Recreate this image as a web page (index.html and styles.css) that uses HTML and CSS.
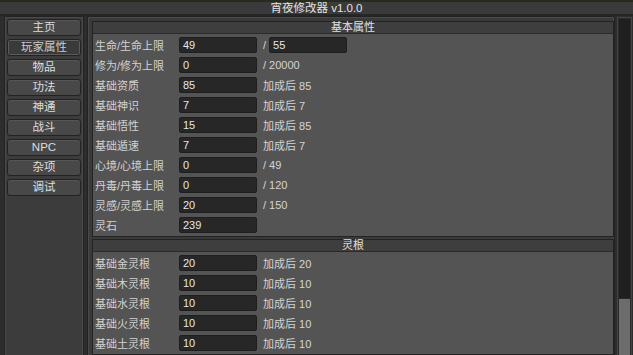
FILE: index.html
```html
<!DOCTYPE html>
<html lang="zh">
<head>
    <meta charset="UTF-8">
    <title>宵夜修改器 v1.0.0</title>
    <link rel="stylesheet" href="styles.css">
</head>
<body>

<div class="titlebar">宵夜修改器 v1.0.0</div>

<div class="window">
    <nav class="sidebar">
        <div class="nav-btn">主页</div>
        <div class="nav-btn active">玩家属性</div>
        <div class="nav-btn">物品</div>
        <div class="nav-btn">功法</div>
        <div class="nav-btn">神通</div>
        <div class="nav-btn">战斗</div>
        <div class="nav-btn">NPC</div>
        <div class="nav-btn">杂项</div>
        <div class="nav-btn">调试</div>
    </nav>

    <main class="content">
        <section class="group">
            <div class="group-head">基本属性</div>
            <div class="group-body">
                <div class="row"><span class="label">生命/生命上限</span><span class="field">49</span><span class="extra slash">/</span><span class="field">55</span></div>
                <div class="row"><span class="label">修为/修为上限</span><span class="field">0</span><span class="extra">/ 20000</span></div>
                <div class="row"><span class="label">基础资质</span><span class="field">85</span><span class="extra">加成后 85</span></div>
                <div class="row"><span class="label">基础神识</span><span class="field">7</span><span class="extra">加成后 7</span></div>
                <div class="row"><span class="label">基础悟性</span><span class="field">15</span><span class="extra">加成后 85</span></div>
                <div class="row"><span class="label">基础遁速</span><span class="field">7</span><span class="extra">加成后 7</span></div>
                <div class="row"><span class="label">心境/心境上限</span><span class="field">0</span><span class="extra">/ 49</span></div>
                <div class="row"><span class="label">丹毒/丹毒上限</span><span class="field">0</span><span class="extra">/ 120</span></div>
                <div class="row"><span class="label">灵感/灵感上限</span><span class="field">20</span><span class="extra">/ 150</span></div>
                <div class="row"><span class="label">灵石</span><span class="field">239</span></div>
            </div>
        </section>

        <section class="group">
            <div class="group-head">灵根</div>
            <div class="group-body">
                <div class="row"><span class="label">基础金灵根</span><span class="field">20</span><span class="extra">加成后 20</span></div>
                <div class="row"><span class="label">基础木灵根</span><span class="field">10</span><span class="extra">加成后 10</span></div>
                <div class="row"><span class="label">基础水灵根</span><span class="field">10</span><span class="extra">加成后 10</span></div>
                <div class="row"><span class="label">基础火灵根</span><span class="field">10</span><span class="extra">加成后 10</span></div>
                <div class="row"><span class="label">基础土灵根</span><span class="field">10</span><span class="extra">加成后 10</span></div>
            </div>
        </section>
    </main>

    <div class="scrollbar"><div class="thumb"></div></div>
</div>

</body>
</html>
```

FILE: styles.css
```css
html, body {
    height: 100%;
}
body {
    margin: 0;
    overflow: hidden;
    background-color: #2d2d2d;
    color: #dcdcdc;
    font-family: "Liberation Sans", "Noto Sans CJK SC", sans-serif;
    font-size: 11px;
    border-top: 2px solid #262b1f;
    box-sizing: border-box;
}
.titlebar {
    height: 12px;
    line-height: 12px;
    text-align: center;
    background-color: #3a3a3a;
    border-bottom: 2px solid #262626;
    color: #e4e4e4;
    font-size: 11.5px;
}
.window {
    display: flex;
    gap: 3px;
    padding: 0 2px 0 4px;
    height: 341px;
}
.sidebar {
    width: 74px;
    flex-shrink: 0;
    background-color: #3c3c3c;
    border: 1px solid #222;
    box-shadow: inset 0 0 0 1px #4a4a4a;
    padding: 2px 2px 0 2px;
    display: flex;
    flex-direction: column;
    gap: 3px;
}
.nav-btn {
    height: 15px;
    line-height: 15px;
    text-align: center;
    background-color: #484848;
    border: 1px solid #222;
    border-radius: 3px;
    box-shadow: inset 0 1px 0 #565656;
    color: #dedede;
    font-size: 11.5px;
}
.nav-btn.active {
    background-color: #3a3a3a;
    box-shadow: inset 0 0 0 1px #5c5c5c;
    color: #cccccc;
}
.content {
    flex: 1;
    background-color: #3a3a3a;
    border: 1px solid #222;
    box-shadow: inset 0 0 0 1px #4a4a4a;
    padding: 4px 0 0 4px;
    display: flex;
    flex-direction: column;
    gap: 2px;
    overflow: hidden;
}
.group {
    border: 1px solid #232323;
    background-color: #545454;
}
.group-head {
    height: 11px;
    line-height: 11px;
    text-align: center;
    background-color: #3e3e3e;
    border-bottom: 1px solid #2a2a2a;
    color: #e0e0e0;
}
.group-body {
    padding: 1px 0 1px 2px;
}
.row {
    height: 20px;
    display: flex;
    align-items: center;
}
.label {
    width: 84px;
    color: #d2d2d2;
}
.field {
    width: 73px;
    height: 14px;
    line-height: 14px;
    padding-left: 3px;
    background-color: #272727;
    border: 1px solid #1e1e1e;
    border-radius: 2px;
    color: #e6e6e6;
}
.extra {
    margin: 0 4px 0 6px;
    color: #d4d4d4;
}
.extra.slash {
    margin-right: 3px;
}
.scrollbar {
    width: 11px;
    flex-shrink: 0;
    background-color: #1f1f1f;
    border: 1px solid #2a2a2a;
    box-shadow: 0 0 0 1px #444;
    margin-top: 2px;
    display: flex;
    flex-direction: column;
    justify-content: flex-end;
}
.thumb {
    height: 57px;
    background-color: #6c6c6c;
    border-top: 1px solid #2a2a2a;
}
```
